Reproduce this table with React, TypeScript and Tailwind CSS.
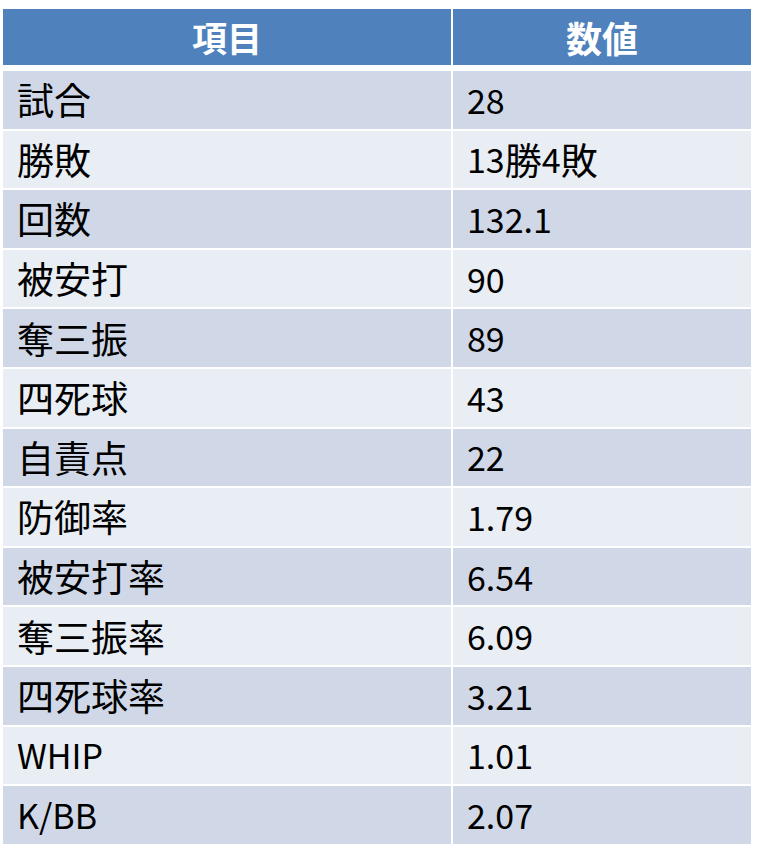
const ROWS: [string, string][] = [
  ['試合', '28'],
  ['勝敗', '13勝4敗'],
  ['回数', '132.1'],
  ['被安打', '90'],
  ['奪三振', '89'],
  ['四死球', '43'],
  ['自責点', '22'],
  ['防御率', '1.79'],
  ['被安打率', '6.54'],
  ['奪三振率', '6.09'],
  ['四死球率', '3.21'],
  ['WHIP', '1.01'],
  ['K/BB', '2.07'],
];

// kanji are set a touch larger than latin, like the slide's mixed fonts
function Mixed({ text }: { text: string }) {
  const parts = text.match(/[\u3000-\u9fff]+|[^\u3000-\u9fff]+/g) ?? [];
  return (
    <>
      {parts.map((p, i) =>
        /[\u3000-\u9fff]/.test(p) ? (
          <span key={i} className="text-[37px]">{p}</span>
        ) : (
          <span key={i} className="text-[34px]">{p}</span>
        ),
      )}
    </>
  );
}

export default function App() {
  return (
    <div className="min-h-[864px] w-[757px] bg-white pt-[9px] pl-[3px] font-['Noto_Sans_CJK_JP',sans-serif] text-black">
      <div className="grid w-[748px] grid-cols-[448px_298px] gap-x-[2px]">
        <div className="flex h-[56px] items-center justify-center bg-[#4f81bd] text-[35px] font-bold text-white">
          項目
        </div>
        <div className="flex h-[56px] items-center justify-center bg-[#4f81bd] text-[36px] font-bold text-white">
          数値
        </div>
      </div>

      <div className="mt-[6px] grid w-[748px] grid-cols-[448px_298px] gap-x-[2px] gap-y-[2px]">
        {ROWS.map(([label, value], i) => {
          const bg = i % 2 === 0 ? 'bg-[#d0d8e8]' : 'bg-[#e9edf4]';
          return (
            <div key={label} className="contents">
              <div className={`flex h-[57.6px] items-center pl-[14px] leading-none ${bg}`}>
                <Mixed text={label} />
              </div>
              <div className={`flex h-[57.6px] items-center pl-[14px] leading-none ${bg}`}>
                <Mixed text={value} />
              </div>
            </div>
          );
        })}
      </div>
    </div>
  );
}
